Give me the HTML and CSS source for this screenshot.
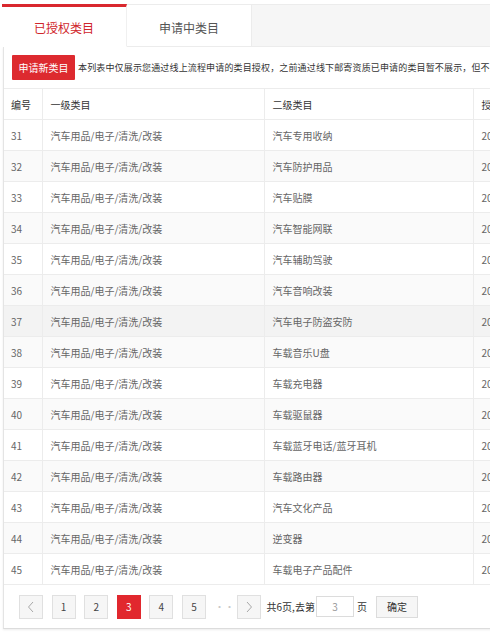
FILE: index.html
```html
<!DOCTYPE html>
<html lang="zh-CN">
<head>
<meta charset="utf-8">
<title>类目管理</title>
<link rel="stylesheet" href="styles.css">
</head>
<body>
<div class="page">
  <div class="tabs">
    <div class="tab active">已授权类目</div>
    <div class="tab">申请中类目</div>
    <div class="tab-fill"></div>
  </div>
  <div class="panel">
    <div class="notice">
      <span class="btn-red">申请新类目</span>
      <span class="notice-text">本列表中仅展示您通过线上流程申请的类目授权，之前通过线下邮寄资质已申请的类目暂不展示，但不影响您正常发布商品。</span>
    </div>
    <table class="grid">
      <colgroup>
        <col class="c1"><col class="c2"><col class="c3"><col class="c4">
      </colgroup>
      <thead>
        <tr><th class="num">编号</th><th>一级类目</th><th>二级类目</th><th>授权时间</th></tr>
      </thead>
      <tbody>
        <tr><td class="num">31</td><td>汽车用品/电子/清洗/改装</td><td>汽车专用收纳</td><td>2017-03-15</td></tr>
        <tr class="even"><td class="num">32</td><td>汽车用品/电子/清洗/改装</td><td>汽车防护用品</td><td>2017-03-15</td></tr>
        <tr><td class="num">33</td><td>汽车用品/电子/清洗/改装</td><td>汽车贴膜</td><td>2017-03-15</td></tr>
        <tr class="even"><td class="num">34</td><td>汽车用品/电子/清洗/改装</td><td>汽车智能网联</td><td>2017-03-15</td></tr>
        <tr><td class="num">35</td><td>汽车用品/电子/清洗/改装</td><td>汽车辅助驾驶</td><td>2017-03-15</td></tr>
        <tr class="even"><td class="num">36</td><td>汽车用品/电子/清洗/改装</td><td>汽车音响改装</td><td>2017-03-15</td></tr>
        <tr class="hover"><td class="num">37</td><td>汽车用品/电子/清洗/改装</td><td>汽车电子防盗安防</td><td>2017-03-15</td></tr>
        <tr class="even"><td class="num">38</td><td>汽车用品/电子/清洗/改装</td><td>车载音乐U盘</td><td>2017-03-15</td></tr>
        <tr><td class="num">39</td><td>汽车用品/电子/清洗/改装</td><td>车载充电器</td><td>2017-03-15</td></tr>
        <tr class="even"><td class="num">40</td><td>汽车用品/电子/清洗/改装</td><td>车载驱鼠器</td><td>2017-03-15</td></tr>
        <tr><td class="num">41</td><td>汽车用品/电子/清洗/改装</td><td>车载蓝牙电话/蓝牙耳机</td><td>2017-03-15</td></tr>
        <tr class="even"><td class="num">42</td><td>汽车用品/电子/清洗/改装</td><td>车载路由器</td><td>2017-03-15</td></tr>
        <tr><td class="num">43</td><td>汽车用品/电子/清洗/改装</td><td>汽车文化产品</td><td>2017-03-15</td></tr>
        <tr class="even"><td class="num">44</td><td>汽车用品/电子/清洗/改装</td><td>逆变器</td><td>2017-03-15</td></tr>
        <tr><td class="num">45</td><td>汽车用品/电子/清洗/改装</td><td>车载电子产品配件</td><td>2017-03-15</td></tr>
      </tbody>
    </table>
    <div class="pager">
      <span class="pg arrow"><svg width="8" height="12" viewBox="0 0 8 12"><polyline points="6,1 1.5,6 6,11" fill="none" stroke="#a8a8a8" stroke-width="1"/></svg></span>
      <span class="pg">1</span>
      <span class="pg">2</span>
      <span class="pg current">3</span>
      <span class="pg">4</span>
      <span class="pg">5</span>
      <span class="dots">···</span>
      <span class="pg arrow next"><svg width="8" height="12" viewBox="0 0 8 12"><polyline points="2,1 6.5,6 2,11" fill="none" stroke="#a8a8a8" stroke-width="1"/></svg></span>
      <span class="total">共6页,去第</span>
      <span class="jump">3</span>
      <span class="unit">页</span>
      <span class="ok">确定</span>
    </div>
  </div>
</div>
</body>
</html>
```

FILE: styles.css
```css
html, body {
  margin: 0;
  padding: 0;
  background: #fff;
  overflow: hidden;
}
body {
  font-family: "Noto Sans CJK SC", "Noto Sans", "Liberation Sans", sans-serif;
  color: #555;
}
.page {
  width: 490px;
  height: 636px;
  overflow: hidden;
}
.tabs {
  display: flex;
  margin-top: 4px;
  margin-left: 2px;
  height: 43px;
}
.tab {
  width: 125px;
  box-sizing: border-box;
  display: flex;
  align-items: center;
  justify-content: center;
  padding-top: 3px;
  font-size: 12px;
  color: #555;
  background: #fff;
  border-top: 1px solid #ececec;
  border-right: 1px solid #ececec;
  border-bottom: 1px solid #ececec;
}
.tab.active {
  color: #d0262c;
  padding-top: 1px;
  border-top: 3px solid #d9282e;
  border-bottom: 1px solid #fff;
  border-right: 1px solid #f0f0f0;
}
.tab-fill {
  flex: 1;
  background: #f6f6f6;
  border-top: 1px solid #ececec;
  border-bottom: 1px solid #ececec;
}
.panel {
  margin-left: 3px;
  width: 700px;
  border-left: 1px solid #e4e4e4;
  border-bottom: 1px solid #dcdcdc;
  box-shadow: 0 1px 2px rgba(0,0,0,0.08);
  background: #fff;
}
.notice {
  height: 41px;
  display: flex;
  align-items: center;
  padding-left: 8px;
  border-bottom: 1px solid #ececec;
  white-space: nowrap;
  overflow: hidden;
}
.btn-red {
  display: inline-flex;
  align-items: center;
  justify-content: center;
  width: 63px;
  height: 25px;
  background: #dd2a2f;
  color: #fff;
  font-size: 10px;
  border-radius: 1px;
  margin-right: 3px;
}
.notice-text {
  font-size: 9px;
  color: #333;
  letter-spacing: 0.15px;
}
.grid {
  border-collapse: collapse;
  table-layout: fixed;
  width: 696px;
}
.c1 { width: 38px; }
.c2 { width: 222px; }
.c3 { width: 209px; }
.c4 { width: 227px; }
.grid th, .grid td {
  height: 30px;
  padding: 0 8px;
  text-align: left;
  font-size: 10px;
  font-weight: normal;
  border-bottom: 1px solid #ececec;
  border-left: 1px solid #ececec;
  white-space: nowrap;
  overflow: hidden;
}
.grid th {
  color: #333;
}
.grid td {
  color: #666;
}
.grid th.num, .grid td.num {
  border-left: none;
  padding-left: 7px;
}
.grid tr.even td {
  background: #fafafa;
}
.grid tr.hover td {
  background: #f3f3f3;
}
.pager {
  height: 43px;
  display: flex;
  align-items: center;
  padding-left: 15px;
  font-size: 10px;
  color: #333;
}
.pg {
  width: 24px;
  height: 24px;
  box-sizing: border-box;
  display: inline-flex;
  align-items: center;
  justify-content: center;
  background: #f6f6f6;
  border: 1px solid #e0e0e0;
  margin-right: 8.6px;
  color: #444;
}
.pg.current {
  background: #e1282e;
  border-color: #e1282e;
  color: #fff;
}
.dots {
  width: 16px;
  color: #c8c8c8;
  margin-right: 6px;
  text-align: center;
}
.pg.next {
  margin-right: 6px;
}
.total {
  margin-right: 1px;
}
.jump {
  width: 38px;
  height: 21px;
  box-sizing: border-box;
  border: 1px solid #dcdcdc;
  display: inline-flex;
  align-items: center;
  justify-content: center;
  color: #999;
  background: #fff;
}
.unit {
  margin-left: 3px;
  margin-right: 9px;
}
.ok {
  width: 42px;
  height: 22px;
  box-sizing: border-box;
  border: 1px solid #dcdcdc;
  background: #f6f6f6;
  display: inline-flex;
  align-items: center;
  justify-content: center;
  color: #333;
}
```
